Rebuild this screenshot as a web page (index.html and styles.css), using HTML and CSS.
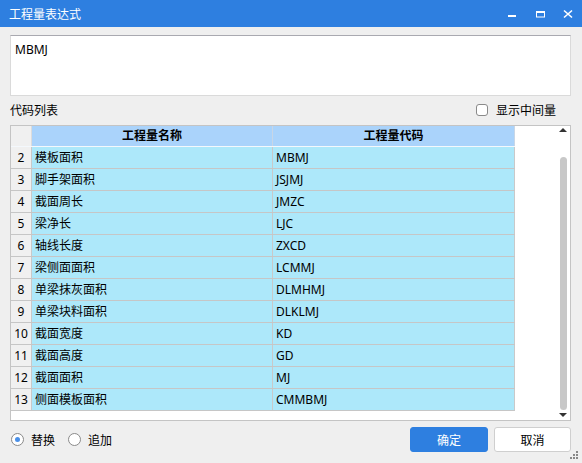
FILE: index.html
```html
<!DOCTYPE html>
<html lang="zh-CN">
<head>
<meta charset="utf-8">
<title>工程量表达式</title>
<link rel="stylesheet" href="styles.css">
</head>
<body>
<div class="window">
  <div class="titlebar">
    <span class="title">工程量表达式</span>
    <div class="controls">
      <span class="ctl"><svg width="28" height="27" viewBox="0 0 28 27"><rect x="10" y="15" width="8" height="2" fill="#fff"/></svg></span>
      <span class="ctl"><svg width="28" height="27" viewBox="0 0 28 27"><rect x="10.5" y="11.5" width="8" height="5.5" fill="none" stroke="#fff" stroke-width="1"/><rect x="10" y="11" width="9" height="2" fill="#fff"/></svg></span>
      <span class="ctl"><svg width="28" height="27" viewBox="0 0 28 27"><path d="M10 10.5 L18 17.5 M18 10.5 L10 17.5" stroke="#fff" stroke-width="1.6" fill="none"/></svg></span>
    </div>
  </div>
  <div class="content">
    <div class="expr">MBMJ</div>
    <div class="listbar">
      <span class="listlabel">代码列表</span>
      <label class="check"><span class="box"></span>显示中间量</label>
    </div>
    <div class="tablebox">
      <div class="grid">
        <div class="row head"><div class="c num"></div><div class="c name">工程量名称</div><div class="c code">工程量代码</div></div>
        <div class="row"><div class="c num">2</div><div class="c name">模板面积</div><div class="c code">MBMJ</div></div>
        <div class="row"><div class="c num">3</div><div class="c name">脚手架面积</div><div class="c code">JSJMJ</div></div>
        <div class="row"><div class="c num">4</div><div class="c name">截面周长</div><div class="c code">JMZC</div></div>
        <div class="row"><div class="c num">5</div><div class="c name">梁净长</div><div class="c code">LJC</div></div>
        <div class="row"><div class="c num">6</div><div class="c name">轴线长度</div><div class="c code">ZXCD</div></div>
        <div class="row"><div class="c num">7</div><div class="c name">梁侧面面积</div><div class="c code">LCMMJ</div></div>
        <div class="row"><div class="c num">8</div><div class="c name">单梁抹灰面积</div><div class="c code">DLMHMJ</div></div>
        <div class="row"><div class="c num">9</div><div class="c name">单梁块料面积</div><div class="c code">DLKLMJ</div></div>
        <div class="row"><div class="c num">10</div><div class="c name">截面宽度</div><div class="c code">KD</div></div>
        <div class="row"><div class="c num">11</div><div class="c name">截面高度</div><div class="c code">GD</div></div>
        <div class="row"><div class="c num">12</div><div class="c name">截面面积</div><div class="c code">MJ</div></div>
        <div class="row"><div class="c num">13</div><div class="c name">侧面模板面积</div><div class="c code">CMMBMJ</div></div>
      </div>
      <div class="scroll">
        <span class="arrow up"></span>
        <span class="thumb"></span>
        <span class="arrow down"></span>
      </div>
    </div>
    <div class="footer">
      <label class="opt"><span class="radio on"></span>替换</label>
      <label class="opt second"><span class="radio"></span>追加</label>
      <div class="buttons">
        <button class="btn primary">确定</button>
        <button class="btn">取消</button>
      </div>
    </div>
  </div>
  <svg class="grip" width="10" height="10" viewBox="0 0 10 10">
    <rect x="7" y="1" width="2" height="2" fill="#888"/>
    <rect x="4" y="4" width="2" height="2" fill="#888"/>
    <rect x="7" y="4" width="2" height="2" fill="#888"/>
    <rect x="1" y="7" width="2" height="2" fill="#888"/>
    <rect x="4" y="7" width="2" height="2" fill="#888"/>
    <rect x="7" y="7" width="2" height="2" fill="#888"/>
  </svg>
</div>
</body>
</html>
```

FILE: styles.css
```css
html, body {
  margin: 0;
  padding: 0;
}
body {
  width: 582px;
  height: 463px;
  overflow: hidden;
  background: #efefef;
  font-family: "Noto Sans", "Noto Sans CJK SC", sans-serif;
  font-size: 12px;
  color: #000;
}
.window {
  position: relative;
  width: 582px;
  height: 463px;
}
.titlebar {
  height: 27px;
  background: #2e7fe0;
  display: flex;
  align-items: center;
  color: #fff;
  padding-left: 9px;
}
.title {
  flex: 1;
  font-size: 12px;
}
.controls {
  display: flex;
  height: 27px;
}
.ctl {
  display: block;
  width: 28px;
  height: 27px;
}
.ctl svg {
  display: block;
}
.content {
  padding: 8px 11px 0 10px;
}
.expr {
  box-sizing: border-box;
  height: 61px;
  background: #fff;
  border: 1px solid #dadada;
  border-top-color: #a9a9b0;
  padding: 6px 4px;
  line-height: 16px;
  font-size: 12px;
}
.listbar {
  margin-top: 4px;
  height: 20px;
  display: flex;
  align-items: center;
  justify-content: space-between;
  padding-right: 15px;
}
.check {
  display: flex;
  align-items: center;
}
.check .box {
  box-sizing: border-box;
  width: 12px;
  height: 12px;
  border: 1px solid #8a8a8a;
  border-radius: 3px;
  background: #fff;
  margin-right: 8px;
}
.tablebox {
  box-sizing: border-box;
  margin-top: 5px;
  height: 296px;
  border: 1px solid #c4c4c4;
  background: #fff;
  display: flex;
}
.grid {
  width: 504px;
  display: flex;
  flex-direction: column;
}
.row {
  display: flex;
  height: 22px;
  box-sizing: border-box;
  border-bottom: 1px solid #c6c6c6;
  background: #ade8fa;
}
.row .c {
  box-sizing: border-box;
  line-height: 21px;
  border-right: 1px solid #c9c9c9;
  white-space: nowrap;
}
.c.num {
  width: 21px;
  background: #f0f0f0;
  text-align: center;
}
.c.name {
  width: 241px;
  padding-left: 3px;
}
.c.code {
  width: 242px;
  padding-left: 3px;
}
.row.head {
  height: 21px;
  border-bottom: 1px solid #f4f8fc;
  background: #aad3fb;
}
.row.head .c {
  line-height: 20px;
  font-weight: bold;
  text-align: center;
  padding-left: 0;
  border-right-color: #c8d6e6;
}
.row.head .c.num {
  background: #f0f0f0;
  border-right-color: #dcdcdc;
}
.scroll {
  margin-left: auto;
  width: 14px;
  display: flex;
  flex-direction: column;
  align-items: center;
}
.arrow {
  display: block;
  width: 0;
  height: 0;
  border-left: 4px solid transparent;
  border-right: 4px solid transparent;
}
.arrow.up {
  margin-top: 2px;
  border-bottom: 4px solid #333;
}
.thumb {
  display: block;
  margin-top: 25px;
  width: 7px;
  height: 253px;
  border-radius: 4px;
  background: #c8c8c8;
}
.arrow.down {
  margin-top: 3px;
  border-top: 4px solid #333;
}
.footer {
  margin-top: 6px;
  height: 25px;
  display: flex;
  align-items: center;
  padding-left: 1px;
}
.opt {
  display: flex;
  align-items: center;
}
.opt.second {
  margin-left: 13px;
}
.radio {
  box-sizing: border-box;
  width: 13px;
  height: 13px;
  border-radius: 50%;
  border: 1px solid #8a8a8a;
  background: #fff;
  margin-right: 7px;
  display: flex;
  align-items: center;
  justify-content: center;
}
.radio.on::after {
  content: "";
  width: 5px;
  height: 5px;
  border-radius: 50%;
  background: #4a90e8;
}
.buttons {
  margin-left: auto;
  display: flex;
  gap: 6px;
}
.btn {
  box-sizing: border-box;
  height: 25px;
  width: 77px;
  border: 1px solid #cfcfcf;
  border-radius: 3px;
  background: #fff;
  color: #000;
  font-family: "Noto Sans", "Noto Sans CJK SC", sans-serif;
  font-size: 12px;
  padding: 0;
}
.btn.primary {
  width: 78px;
  background: #2e7fe0;
  border-color: #2e7fe0;
  color: #fff;
}
.grip {
  position: absolute;
  right: 3px;
  bottom: 3px;
}
```
